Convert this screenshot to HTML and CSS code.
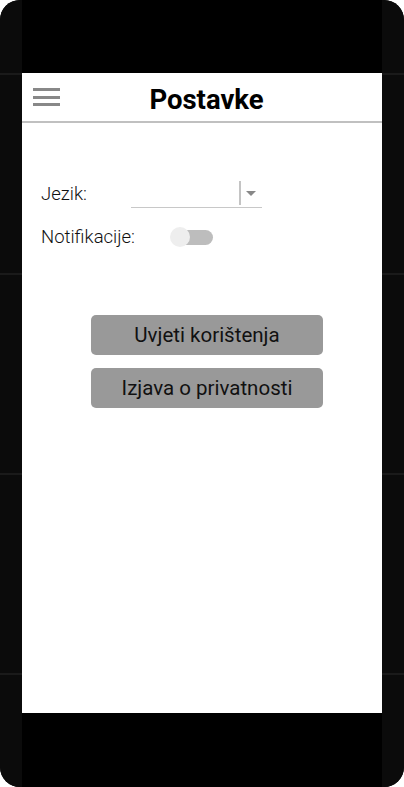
FILE: index.html
```html
<!DOCTYPE html>
<html lang="hr">
<head>
<meta charset="utf-8">
<title>Postavke</title>
<link rel="stylesheet" href="styles.css">
</head>
<body>
<div class="phone">
  <div class="side">
    <div class="seg seg-a"></div><div class="seg seg-b"></div><div class="seg seg-b"></div><div class="seg seg-b"></div><div class="seg seg-rest"></div>
  </div>
  <div class="center">
    <div class="bezel-top"></div>
    <div class="screen">
      <header class="appbar">
        <button class="menu" aria-label="Izbornik">
          <span class="bar"></span><span class="bar"></span><span class="bar"></span>
        </button>
        <h1 class="title">Postavke</h1>
        <span class="spacer"></span>
      </header>
      <main class="content">
        <div class="settings">
          <div class="row">
            <span class="label">Jezik:</span>
            <div class="select">
              <span class="select-value"></span>
              <span class="select-divider"></span>
              <span class="select-arrow"></span>
            </div>
          </div>
          <div class="row">
            <span class="label">Notifikacije:</span>
            <span class="toggle"><span class="thumb"></span></span>
          </div>
        </div>
        <div class="actions">
          <button class="btn">Uvjeti korištenja</button>
          <button class="btn">Izjava o privatnosti</button>
        </div>
      </main>
    </div>
    <div class="bezel-bottom"></div>
  </div>
  <div class="side">
    <div class="seg seg-a"></div><div class="seg seg-b"></div><div class="seg seg-b"></div><div class="seg seg-b"></div><div class="seg seg-rest"></div>
  </div>
</div>
</body>
</html>
```

FILE: styles.css
```css
* { box-sizing: border-box; }
html, body { margin: 0; padding: 0; background: #ffffff; }
body { width: 404px; height: 787px; overflow: hidden; font-family: Roboto, "Liberation Sans", sans-serif; }

.phone {
  display: flex;
  width: 404px;
  height: 787px;
  border-radius: 20px;
  overflow: hidden;
  background: #0b0b0b;
}
.side { width: 22px; display: flex; flex-direction: column; background: #0b0b0b; }
.seg { flex: none; }
.seg-a { height: 73px; }
.seg-b { height: 200px; border-top: 2px solid #1a1a1a; }
.seg-rest { flex: 1; border-top: 2px solid #1a1a1a; }

.center { width: 360px; display: flex; flex-direction: column; background: #000; }
.bezel-top { height: 73px; }
.bezel-bottom { flex: 1; }
.screen { height: 640px; background: #fff; display: flex; flex-direction: column; }

.appbar {
  height: 50px;
  display: flex;
  align-items: center;
  border-bottom: 2px solid #c0c0c0;
}
.menu {
  width: 38px;
  height: 48px;
  padding: 0 0 0 11px;
  border: 0;
  background: transparent;
  display: flex;
  flex-direction: column;
  justify-content: center;
  gap: 4.5px;
}
.bar { display: block; width: 27px; height: 3px; background: #888; }
.title {
  flex: 1;
  margin: 0;
  padding-top: 5px;
  text-align: center;
  font-size: 27.5px;
  font-weight: 700;
  color: #000;
  line-height: 48px;
}
.spacer { width: 29px; }

.content { padding: 57px 0 0 19px; }
.settings { display: flex; flex-direction: column; gap: 15px; }
.row { display: flex; align-items: center; height: 28px; }
.label { font-size: 18.5px; font-weight: 300; color: #111; width: 90px; }
.row:nth-child(2) .label { width: auto; }

.select {
  width: 131px;
  height: 28px;
  display: flex;
  align-items: center;
  border-bottom: 1px solid #c8c8c8;
}
.select-value { flex: 1; }
.select-divider { width: 2px; height: 24px; background: #c4c4c4; margin-bottom: 2px; }
.select-arrow {
  width: 0; height: 0;
  margin: 0 6px 0 5px;
  border-left: 5px solid transparent;
  border-right: 5px solid transparent;
  border-top: 5px solid #888;
}

.toggle {
  position: relative;
  margin-left: 35px;
  width: 43px;
  height: 20px;
  display: flex;
  align-items: center;
}
.toggle::before {
  content: "";
  display: block;
  margin-left: 9px;
  width: 34px;
  height: 15px;
  border-radius: 8px;
  background: #bdbdbd;
}
.thumb {
  position: absolute;
  left: 0;
  top: 0;
  width: 20px;
  height: 20px;
  border-radius: 50%;
  background: #eeeeee;
}

.actions {
  margin: 64px 0 0 50px;
  display: flex;
  flex-direction: column;
  gap: 13px;
}
.btn {
  width: 232px;
  height: 40px;
  border: 0;
  border-radius: 5px;
  background: #999999;
  color: #111;
  font-family: Roboto, "Liberation Sans", sans-serif;
  font-size: 20.5px;
  font-weight: 400;
  padding: 0;
}
```
